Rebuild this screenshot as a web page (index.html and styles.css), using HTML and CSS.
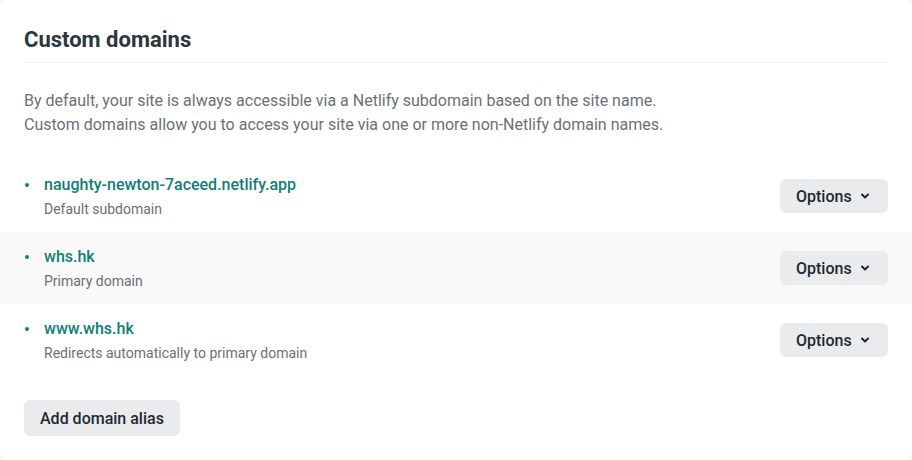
FILE: index.html
```html
<!DOCTYPE html>
<html lang="en">
<head>
<meta charset="utf-8">
<title>Custom domains</title>
<link rel="stylesheet" href="styles.css">
</head>
<body>
<section class="card">
  <header class="card-header">
    <h2 class="card-title">Custom domains</h2>
  </header>
  <p class="intro">By default, your site is always accessible via a Netlify subdomain based on the site name.<br>Custom domains allow you to access your site via one or more non-Netlify domain names.</p>
  <ul class="domains">
    <li class="domain">
      <span class="dot"></span>
      <div class="domain-info">
        <a class="domain-name" href="#">naughty-newton-7aceed.netlify.app</a>
        <div class="domain-sub">Default subdomain</div>
      </div>
      <button class="btn btn-options">Options <svg class="chev" viewBox="0 0 10 10" width="10" height="10"><path d="M2 3.5 L5 6.5 L8 3.5" fill="none" stroke="currentColor" stroke-width="2" stroke-linecap="round" stroke-linejoin="round"/></svg></button>
    </li>
    <li class="domain domain-alt">
      <span class="dot"></span>
      <div class="domain-info">
        <a class="domain-name" href="#">whs.hk</a>
        <div class="domain-sub">Primary domain</div>
      </div>
      <button class="btn btn-options">Options <svg class="chev" viewBox="0 0 10 10" width="10" height="10"><path d="M2 3.5 L5 6.5 L8 3.5" fill="none" stroke="currentColor" stroke-width="2" stroke-linecap="round" stroke-linejoin="round"/></svg></button>
    </li>
    <li class="domain">
      <span class="dot"></span>
      <div class="domain-info">
        <a class="domain-name" href="#">www.whs.hk</a>
        <div class="domain-sub">Redirects automatically to primary domain</div>
      </div>
      <button class="btn btn-options">Options <svg class="chev" viewBox="0 0 10 10" width="10" height="10"><path d="M2 3.5 L5 6.5 L8 3.5" fill="none" stroke="currentColor" stroke-width="2" stroke-linecap="round" stroke-linejoin="round"/></svg></button>
    </li>
  </ul>
  <div class="actions">
    <button class="btn btn-add">Add domain alias</button>
  </div>
</section>
</body>
</html>
```
FILE: styles.css
```css
* { box-sizing: border-box; }
html, body { margin: 0; padding: 0; }
body {
  background: #f3f7f7;
  font-family: Roboto, "Liberation Sans", sans-serif;
  width: 912px;
  height: 460px;
}
.card {
  background: #fff;
  border-radius: 8px;
  height: 460px;
  padding: 24px 0 24px;
}
.card-header {
  margin: 0 24px;
  border-bottom: 1px solid #f0f2f3;
  padding-bottom: 6px;
}
.card-title {
  margin: 0;
  font-size: 22px;
  line-height: 32px;
  font-weight: 700;
  color: #2b373d;
}
.intro {
  margin: 26px 24px 0;
  font-size: 16px;
  line-height: 24px;
  color: #6b7075;
}
.domains {
  list-style: none;
  margin: 23px 0 0;
  padding: 0;
}
.domain {
  display: flex;
  align-items: center;
  height: 72px;
  padding: 0 24px;
}
.domain-alt { background: #f9f9f9; }
.dot {
  width: 4px;
  height: 4px;
  border-radius: 50%;
  background: #0f7f75;
  margin: 23px 15px 0 1px;
  align-self: flex-start;
}
.domain-info { flex: 1; padding-top: 2px; }
.domain-name {
  display: block;
  font-size: 16px;
  line-height: 24px;
  font-weight: 500;
  color: #0f7f75;
  text-decoration: none;
}
.domain-sub {
  font-size: 14px;
  line-height: 24px;
  color: #6b7075;
}
.btn {
  border: 0;
  background: #e9ebed;
  color: #1e2a30;
  font-family: inherit;
  font-size: 16px;
  font-weight: 500;
  border-radius: 6px;
  height: 34px;
  padding: 0 16px;
  cursor: pointer;
}
.btn-options {
  display: inline-flex;
  align-items: center;
  gap: 8px;
  width: 108px;
}
.chev { display: block; }
.actions {
  margin: 24px 24px 0;
}
.btn-add { height: 36px; }
```
